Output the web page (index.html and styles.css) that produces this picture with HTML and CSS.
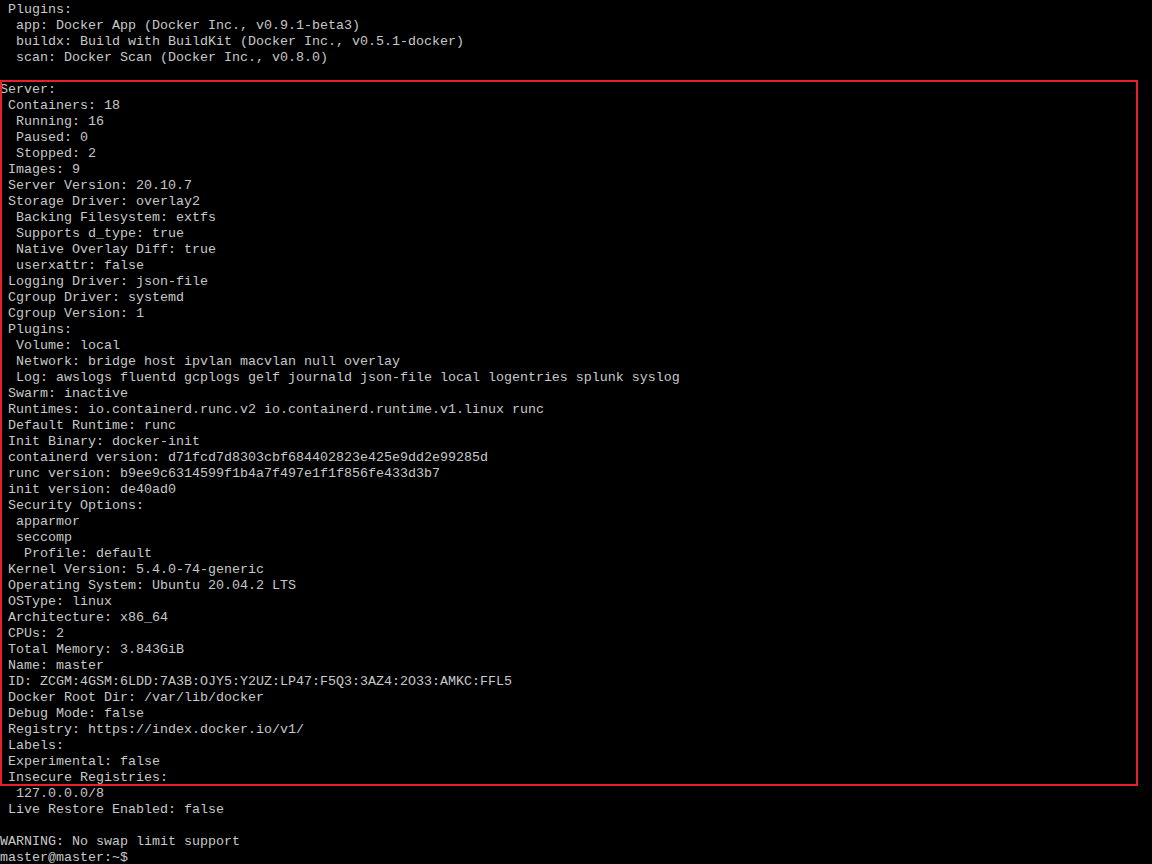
FILE: index.html
```html
<!DOCTYPE html>
<html lang="en">
<head>
<meta charset="utf-8">
<title>docker info</title>
<link rel="stylesheet" href="styles.css">
</head>
<body>
<div class="screen">
<pre class="console"> Plugins:
  app: Docker App (Docker Inc., v0.9.1-beta3)
  buildx: Build with BuildKit (Docker Inc., v0.5.1-docker)
  scan: Docker Scan (Docker Inc., v0.8.0)

Server:
 Containers: 18
  Running: 16
  Paused: 0
  Stopped: 2
 Images: 9
 Server Version: 20.10.7
 Storage Driver: overlay2
  Backing Filesystem: extfs
  Supports d_type: true
  Native Overlay Diff: true
  userxattr: false
 Logging Driver: json-file
 Cgroup Driver: systemd
 Cgroup Version: 1
 Plugins:
  Volume: local
  Network: bridge host ipvlan macvlan null overlay
  Log: awslogs fluentd gcplogs gelf journald json-file local logentries splunk syslog
 Swarm: inactive
 Runtimes: io.containerd.runc.v2 io.containerd.runtime.v1.linux runc
 Default Runtime: runc
 Init Binary: docker-init
 containerd version: d71fcd7d8303cbf684402823e425e9dd2e99285d
 runc version: b9ee9c6314599f1b4a7f497e1f1f856fe433d3b7
 init version: de40ad0
 Security Options:
  apparmor
  seccomp
   Profile: default
 Kernel Version: 5.4.0-74-generic
 Operating System: Ubuntu 20.04.2 LTS
 OSType: linux
 Architecture: x86_64
 CPUs: 2
 Total Memory: 3.843GiB
 Name: master
 ID: ZCGM:4GSM:6LDD:7A3B:OJY5:Y2UZ:LP47:F5Q3:3AZ4:2O33:AMKC:FFL5
 Docker Root Dir: /var/lib/docker
 Debug Mode: false
 Registry: https://index.docker.io/v1/
 Labels:
 Experimental: false
 Insecure Registries:
  127.0.0.0/8
 Live Restore Enabled: false

WARNING: No swap limit support
master@master:~$</pre>
<div class="highlight"></div>
</div>
</body>
</html>
```
FILE: styles.css
```css
html, body {
  margin: 0;
  padding: 0;
  background: #000;
  height: 100%;
  overflow: hidden;
}

.screen {
  position: relative;
  width: 1152px;
  height: 864px;
  background: #000;
  overflow: hidden;
}

.console {
  margin: 0;
  padding: 2px 0 0 0;
  font-family: "Liberation Mono", "DejaVu Sans Mono", monospace;
  font-size: 13.333px;
  line-height: 16px;
  color: #c8c8c8;
  white-space: pre;
}

.highlight {
  position: absolute;
  left: 0;
  top: 80px;
  width: 1134px;
  height: 702px;
  border: 2px solid #e8202a;
  pointer-events: none;
}
```
